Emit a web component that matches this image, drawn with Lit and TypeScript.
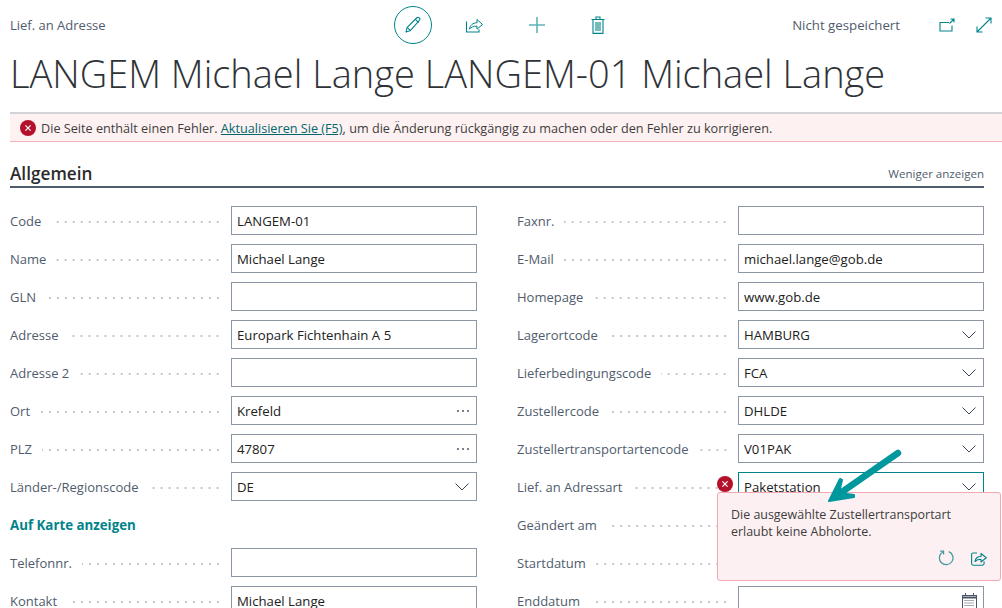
import { LitElement, html, css, svg } from "lit";
import { customElement } from "lit/decorators.js";

type Kind = "text" | "dots" | "select" | "date" | "active";
interface Row { label: string; value: string; kind: Kind; }

const left: (Row | null)[] = [
  { label: "Code", value: "LANGEM-01", kind: "text" },
  { label: "Name", value: "Michael Lange", kind: "text" },
  { label: "GLN", value: "", kind: "text" },
  { label: "Adresse", value: "Europark Fichtenhain A 5", kind: "text" },
  { label: "Adresse 2", value: "", kind: "text" },
  { label: "Ort", value: "Krefeld", kind: "dots" },
  { label: "PLZ", value: "47807", kind: "dots" },
  { label: "Länder-/Regionscode", value: "DE", kind: "select" },
  null,
  { label: "Telefonnr.", value: "", kind: "text" },
  { label: "Kontakt", value: "Michael Lange", kind: "text" },
];
const right: Row[] = [
  { label: "Faxnr.", value: "", kind: "text" },
  { label: "E-Mail", value: "michael.lange@gob.de", kind: "text" },
  { label: "Homepage", value: "www.gob.de", kind: "text" },
  { label: "Lagerortcode", value: "HAMBURG", kind: "select" },
  { label: "Lieferbedingungscode", value: "FCA", kind: "select" },
  { label: "Zustellercode", value: "DHLDE", kind: "select" },
  { label: "Zustellertransportartencode", value: "V01PAK", kind: "select" },
  { label: "Lief. an Adressart", value: "Paketstation", kind: "active" },
  { label: "Geändert am", value: "", kind: "text" },
  { label: "Startdatum", value: "", kind: "text" },
  { label: "Enddatum", value: "", kind: "date" },
];

const chevron = html`<svg class="tail" width="16" height="10" viewBox="0 0 16 10" fill="none" stroke="#3a4658" stroke-width="1"><path d="M1.5 1.5 8 8l6.5-6.5"/></svg>`;
const dots = html`<svg class="tail" width="14" height="4" viewBox="0 0 14 4" fill="#3a4658"><circle cx="2" cy="2" r=".9"/><circle cx="7" cy="2" r=".9"/><circle cx="12" cy="2" r=".9"/></svg>`;
const calendar = html`<svg class="tail" width="15" height="16" viewBox="0 0 15 16" fill="none" stroke="#4a5567" stroke-width="1"><rect x=".5" y="2.5" width="14" height="13"/><path d="M.5 4.5h14" stroke-width="2"/><path d="M3.5 0v3M11.5 0v3"/><path d="M2.5 7.5h10M2.5 10h10M2.5 12.5h10" stroke-dasharray="1 1"/></svg>`;
const errIcon = html`<svg width="16" height="16" viewBox="0 0 16 16"><circle cx="8" cy="8" r="8" fill="#b3122a"/><path d="M5.4 5.4l5.2 5.2M10.6 5.4l-5.2 5.2" stroke="#fff" stroke-width="1.2"/></svg>`;
const share = (c: string) => svg`<path d="M1.5 5.5v10.5h12.5v-2.5" fill="none" stroke="${c}" stroke-width="1.1"/><path d="M4.5 13c.5-3.8 3.4-6.2 7.5-6.2V3.5l5.5 5-5.5 4.6v-3c-3.4 0-5.8 1-7.5 2.9z" fill="none" stroke="${c}" stroke-width="1" stroke-linejoin="round"/>`;

@customElement("app-root")
export class AppRoot extends LitElement {
  static styles = css`
    :host {
      display: block;
      position: relative;
      width: 1002px;
      height: 608px;
      overflow: hidden;
      background: #fff;
      font-family: "Open Sans", "Noto Sans", sans-serif;
      font-size: 13px;
      color: #212121;
    }
    .top {
      display: grid;
      grid-template-columns: 384px auto 1fr;
      align-items: center;
      height: 50px;
      padding: 0 10px 0 10px;
      box-sizing: border-box;
    }
    .crumb { color: #505c6d; font-size: 13px; }
    .actions { display: flex; align-items: center; }
    .edit {
      width: 38px; height: 38px; border-radius: 50%;
      border: 1px solid #008489; box-sizing: border-box;
      display: flex; align-items: center; justify-content: center;
    }
    .act { display: flex; margin-left: 33px; }
    .act.plus { margin-left: 44px; }
    .act.trash { margin-left: 45px; }
    .status { display: flex; justify-content: flex-end; align-items: center; color: #505c6d; font-size: 13.25px; }
    .status svg { margin-left: 21px; }
    .status svg:first-of-type { margin-left: 39px; }
    h1 {
      margin: 0; padding: 0 0 0 10px;
      height: 62px;
      font-size: 38px; font-weight: 300; line-height: 46px;
      color: #2f3337; white-space: nowrap;
    }
    .banner {
      margin-left: 10px;
      height: 30px; box-sizing: border-box;
      background: #fdf1f2;
      border-top: 2px solid #d2d4d9;
      border-bottom: 1px solid #f0b4ba;
      display: flex; align-items: center; gap: 5px;
      padding-left: 10px;
      font-size: 12.67px; color: #3d3d3d;
      white-space: nowrap;
    }
    .banner span { padding-top: 1px; }
    .banner a { color: #00686d; text-decoration: underline; }
    .section {
      margin: 19px 18px 0 10px;
      height: 27px; box-sizing: border-box;
      border-bottom: 2px solid #505c6d;
      display: flex; justify-content: space-between; align-items: center;
    }
    .section b { font-size: 17.2px; font-weight: 600; color: #2b2b2b; line-height: 22px; }
    .section span { font-size: 11.55px; color: #505c6d; }
    .form {
      display: grid;
      grid-template-columns: 467px 467px;
      column-gap: 40px;
      margin: 18px 0 0 10px;
    }
    .col { display: flex; flex-direction: column; gap: 9px; }
    .row { display: grid; grid-template-columns: 221px 246px; height: 29px; align-items: center; }
    .label { display: flex; align-items: center; color: #505c6d; overflow: hidden; padding: 0 9px 0 0; white-space: nowrap; }
    .leader { flex: 1; margin-left: 10px; height: 2px; margin-top: 2px;
      background-image: radial-gradient(circle, #c4c7cc 0.9px, transparent 1px);
      background-size: 8px 2px; background-position: right; }
    .input {
      height: 29px; box-sizing: border-box;
      border: 1px solid #8b95a3;
      padding: 0 5px;
      display: flex; align-items: center; justify-content: space-between;
      color: #212121; background: #fff; white-space: nowrap;
      font-size: 13.2px;
    }
    .input.active { border-color: #00838a; position: relative; }
    .tail { flex: none; margin-right: 1px; }
    .link { display: block; height: 29px; line-height: 31px; font-weight: 700; color: #00848a; font-size: 13.3px; }
    .err {
      position: absolute; left: 717px; top: 476px; width: 16px; height: 16px;
    }
    .popup {
      position: absolute; left: 717px; top: 492px; width: 284px; height: 89px;
      box-sizing: border-box;
      background: #fcf0f2;
      border: 1px solid #f2a8b0; border-radius: 3px;
      padding: 13px 13px;
      font-size: 12.45px; line-height: 17px; color: #3d3d3d;
    }
    .popup .tools { position: absolute; right: 13px; bottom: 14px; display: flex; gap: 17px; align-items: center; }
    .arrow { position: absolute; left: 820px; top: 440px; pointer-events: none; }
  `;

  private field(r: Row) {
    const tail = r.kind === "dots" ? dots
      : r.kind === "select" || r.kind === "active" ? chevron
      : r.kind === "date" ? calendar : null;
    return html`<div class="row">
      <div class="label">${r.label}<span class="leader"></span></div>
      <div class="input ${r.kind === "active" ? "active" : ""}"><span>${r.value}</span>${tail}</div>
    </div>`;
  }

  render() {
    const teal = "#00848a";
    return html`
      <div class="top">
        <div class="crumb">Lief. an Adresse</div>
        <div class="actions">
          <div class="edit">
            <svg width="18" height="18" viewBox="0 0 18 18" fill="none" stroke="${teal}" stroke-width="1.1" stroke-linejoin="round">
              <path d="M2 16l1.2-4.6L12.6 2c.8-.8 1.9-.8 2.6-.1.8.8.8 1.9 0 2.7L6 14.8z"/><path d="M11.4 3.3l3.3 3.3M3.2 11.4l3 3"/>
            </svg>
          </div>
          <span class="act"><svg width="19" height="18" viewBox="0 0 19 18">${share(teal)}</svg></span>
          <span class="act plus"><svg width="18" height="18" viewBox="0 0 18 18"><path d="M9 1v16M1 9h16" stroke="#5fb3b7" stroke-width="1.6"/></svg></span>
          <span class="act trash"><svg width="14" height="18" viewBox="0 0 14 18" fill="none" stroke="${teal}" stroke-width="1.1"><path d="M.5 3.5h13M2 3.5v13.9h10V3.5M5 3V1h4v2"/><path d="M5 6v9M7 6v9M9 6v9"/></svg></span>
        </div>
        <div class="status">
          Nicht gespeichert
          <svg width="16" height="14" viewBox="0 0 16 14" fill="none" stroke="${teal}" stroke-width="1.1"><path d="M10 4.5H1v8.5h12V7.5"/><path d="M10.5 5.5 15 1M11.5 1H15v3.5"/></svg>
          <svg width="16" height="16" viewBox="0 0 16 16" fill="none" stroke="${teal}" stroke-width="1.1"><path d="M1 15 15 1M9.5 1H15v5.5M1 9.5V15h5.5"/></svg>
        </div>
      </div>
      <h1>LANGEM Michael Lange LANGEM-01 Michael Lange</h1>
      <div class="banner">
        ${errIcon}
        <span>Die Seite enthält einen Fehler. <a>Aktualisieren Sie (F5)</a>, um die Änderung rückgängig zu machen oder den Fehler zu korrigieren.</span>
      </div>
      <div class="section"><b>Allgemein</b><span>Weniger anzeigen</span></div>
      <div class="form">
        <div class="col">
          ${left.map((r) => r ? this.field(r) : html`<a class="link">Auf Karte anzeigen</a>`)}
        </div>
        <div class="col">${right.map((r) => this.field(r))}</div>
      </div>
      <div class="err">${errIcon}</div>
      <div class="popup">
        Die ausgewählte Zustellertransportart<br />erlaubt keine Abholorte.
        <div class="tools">
          <svg width="16" height="16" viewBox="0 0 16 16" fill="none" stroke="#3f9599" stroke-width="1.2"><path d="M4.8 2A6.8 6.8 0 1 0 10.8 1.6"/><path d="M2.2 1.2h3.4v3.4" /></svg>
          <svg width="16" height="15" viewBox="0 0 16 15" fill="none" stroke="${teal}" stroke-width="1.1" stroke-linejoin="round"><path d="M6 2H2.2C1.300 2 .6 2.700 .6 3.600v9c0 .9.7 1.600 1.600 1.600h9.300c.9 0 1.600-.7 1.600-1.600v-2"/><path d="M4 10.500c.4-3 2.800-5 6-5V2.500l5.300 4.300L10 11V8.300c-2.700 0-4.600.7-6 2.200z"/></svg>
        </div>
      </div>
      <svg class="arrow" width="90" height="70" viewBox="0 0 90 70" fill="none">
        <path d="M78 13 19 54" stroke="#00979d" stroke-width="6.500" stroke-linecap="round"/>
        <path d="M9 61 20 39l2 1-3 13 15 2v2z" fill="#00979d" stroke="#00979d" stroke-width="2" stroke-linejoin="round"/>
      </svg>
    `;
  }
}
